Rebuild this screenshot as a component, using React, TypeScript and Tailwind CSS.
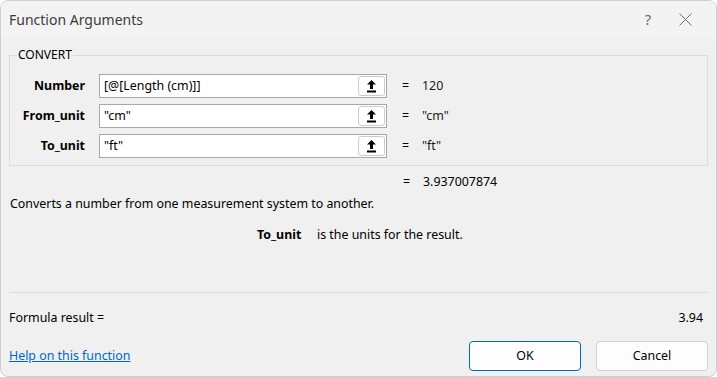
import React from 'react';

const UploadIcon = () => (
  <svg width="9" height="13" viewBox="0 0 9 13" className="block">
    <path d="M4.5 0 L9 4.5 L6 4.5 L6 9 L3 9 L3 4.5 L0 4.5 Z" fill="#000" />
    <rect x="0" y="10.5" width="9" height="2" fill="#000" />
  </svg>
);

const args = [
  { label: 'Number', value: '[@[Length (cm)]]', result: '120' },
  { label: 'From_unit', value: '"cm"', result: '"cm"' },
  { label: 'To_unit', value: '"ft"', result: '"ft"' },
];

const App = () => {
  return (
    <div
      className="w-[717px] h-[377px] bg-white text-[12.4px] text-black"
      style={{ fontFamily: '"Noto Sans", "Open Sans", sans-serif' }}
    >
      <div className="flex flex-col h-full bg-[#f0f0f0] rounded-[8px] border border-[#cfcfcf] overflow-hidden">
        {/* title bar */}
        <div className="h-[37px] shrink-0 bg-[#f3f3f3] flex items-center pl-[8px]">
          <span className="text-[14px] text-[#3c3c3c] flex-1">Function Arguments</span>
          <span className="text-[15px] text-[#6b6b6b] w-[16px] text-center">?</span>
          <span className="w-[58px] flex justify-center mr-[2px]">
            <svg width="13" height="13" viewBox="0 0 13 13">
              <path d="M0.5 0.5 L12.5 12.5 M12.5 0.5 L0.5 12.5" stroke="#6b6b6b" strokeWidth="1" />
            </svg>
          </span>
        </div>

        <div className="flex flex-col flex-1 px-[8px]">
          <fieldset className="mt-[9px] border border-[#dcdcdc] pb-[7px]">
            <legend className="ml-[7px] px-[1px] leading-[16px] text-[12px]">CONVERT</legend>
            <div className="flex flex-col gap-[6px] mt-[11px]">
              {args.map((a) => (
                <div key={a.label} className="flex items-center h-[24px]">
                  <div className="w-[75px] text-right font-bold">{a.label}</div>
                  <div className="ml-[14px] w-[288px] h-[24px] flex items-stretch bg-white border border-[#a8a8a8]">
                    <div className="flex-1 flex items-center pl-[4px]">{a.value}</div>
                    <div className="w-[27px] m-[1px] flex items-center justify-center bg-white border border-[#cccccc] rounded-[3px]">
                      <UploadIcon />
                    </div>
                  </div>
                  <div className="ml-[15px] w-[20px]">=</div>
                  <div className="text-[#1a1a1a]">{a.result}</div>
                </div>
              ))}
            </div>
          </fieldset>

          <div className="flex h-[20px] items-center mt-[6px]">
            <div className="ml-[394px] w-[20px]">=</div>
            <div>3.937007874</div>
          </div>
          <div className="h-[20px] flex items-center pl-[1px] mt-[2px]">
            Converts a number from one measurement system to another.
          </div>
          <div className="h-[20px] flex items-center mt-[11px]">
            <span className="ml-[248px] font-bold w-[60px]">To_unit</span>
            <span>is the units for the result.</span>
          </div>

          <div className="mt-[47px] border-t border-[#dcdcdc]" />

          <div className="flex justify-between items-center h-[20px] mt-[15px]">
            <span>Formula result =</span>
            <span className="mr-[5px]">3.94</span>
          </div>

          <div className="flex items-center mt-[13px]">
            <a href="#" className="flex-1 text-[#0066cc] underline">
              Help on this function
            </a>
            <button className="w-[112px] h-[30px] rounded-[4px] bg-[#fdfdfd] border border-[#0067c0]">
              OK
            </button>
            <button className="ml-[15px] w-[112px] h-[30px] rounded-[4px] bg-[#fdfdfd] border border-[#d0d0d0]">
              Cancel
            </button>
          </div>
        </div>
      </div>
    </div>
  );
};

export default App;
